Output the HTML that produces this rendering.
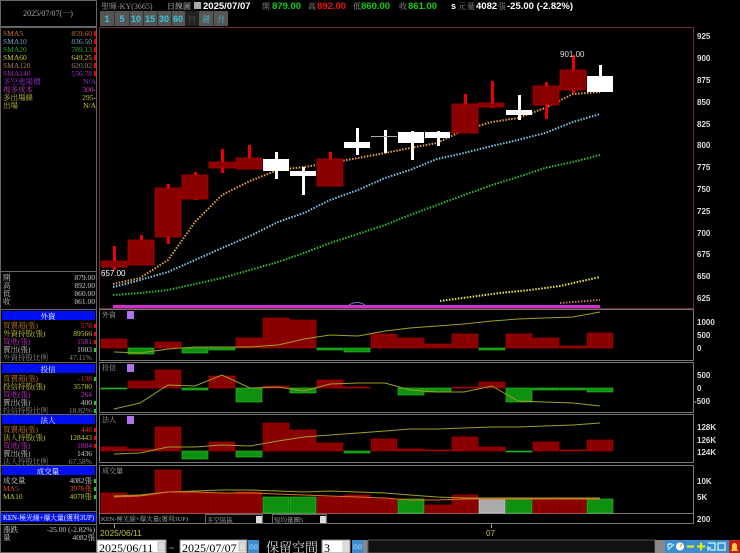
<!DOCTYPE html>
<html><head><meta charset="utf-8"><style>
body{margin:0;background:#000;width:740px;height:553px;overflow:hidden}
svg{display:block;font-size:8px}
text{font-family:"Liberation Sans","Noto Sans CJK TC",sans-serif}
.s{font-family:"Liberation Serif","Noto Serif CJK SC",serif}
</style></head><body>
<svg width="740" height="553" viewBox="0 0 740 553" xmlns="http://www.w3.org/2000/svg">
<rect width="740" height="553" fill="#000"/>
<rect x="0.5" y="0.5" width="96" height="26" fill="none" stroke="#666"/>
<text x="48" y="16" text-anchor="middle" class="s" fill="#aaa">2025/07/07(一)</text>
<rect x="0.5" y="27.5" width="96" height="525" fill="none" stroke="#666"/>
<g font-size="7.5">
<text x="3" y="36" class="s" fill="#c8782a">SMA5</text><text x="92" y="36" class="s" fill="#c8782a" text-anchor="end">859.60</text>
<text x="3" y="44" class="s" fill="#6fa6c8">SMA10</text><text x="92" y="44" class="s" fill="#6fa6c8" text-anchor="end">836.50</text>
<text x="3" y="52" class="s" fill="#2ea82e">SMA20</text><text x="92" y="52" class="s" fill="#2ea82e" text-anchor="end">789.13</text>
<text x="3" y="60" class="s" fill="#c8c83a">SMA60</text><text x="92" y="60" class="s" fill="#c8c83a" text-anchor="end">649.25</text>
<text x="3" y="68" class="s" fill="#a08060">SMA120</text><text x="92" y="68" class="s" fill="#a08060" text-anchor="end">620.02</text>
<text x="3" y="76" class="s" fill="#a030c0">SMA240</text><text x="92" y="76" class="s" fill="#a030c0" text-anchor="end">556.78</text>
<text x="3" y="84" class="s" fill="#9030d0">多空進場價</text><text x="96" y="84" class="s" fill="#9030d0" text-anchor="end">N/A</text>
<text x="3" y="92" class="s" fill="#c040c0">視多成本</text><text x="96" y="92" class="s" fill="#c040c0" text-anchor="end">300-</text>
<text x="3" y="100" class="s" fill="#c8c83a">多出場線</text><text x="96" y="100" class="s" fill="#c8c83a" text-anchor="end">295-</text>
<text x="3" y="108" class="s" fill="#c8c83a">出場</text><text x="96" y="108" class="s" fill="#c8c83a" text-anchor="end">N/A</text>
</g>
<g fill="#e00"><rect x="94" y="31" width="2" height="5"/><rect x="94" y="39" width="2" height="5"/><rect x="94" y="47" width="2" height="5"/><rect x="94" y="55" width="2" height="5"/><rect x="94" y="63" width="2" height="5"/><rect x="94" y="71" width="2" height="5"/></g>
<line x1="0" y1="271.5" x2="97" y2="271.5" stroke="#666"/>
<g font-size="7.5">
<text x="3" y="280" class="s" fill="#ccc">開</text><text x="95" y="280" class="s" fill="#ccc" text-anchor="end">879.00</text>
<text x="3" y="288" class="s" fill="#ccc">高</text><text x="95" y="288" class="s" fill="#ccc" text-anchor="end">892.00</text>
<text x="3" y="296" class="s" fill="#ccc">低</text><text x="95" y="296" class="s" fill="#ccc" text-anchor="end">860.00</text>
<text x="3" y="304" class="s" fill="#ccc">收</text><text x="95" y="304" class="s" fill="#ccc" text-anchor="end">861.00</text>
</g>
<line x1="0" y1="309.5" x2="97" y2="309.5" stroke="#666"/>
<g font-size="7.5">
<rect x="2" y="311" width="93" height="9" fill="#0010f0"/><text x="48" y="319" class="s" fill="#fff" text-anchor="middle">外資</text>
<text x="3" y="328" class="s" fill="#c8782a">買賣超(張)</text><text x="92" y="328" class="s" fill="#e03030" text-anchor="end">578</text>
<text x="3" y="336" class="s" fill="#c8c83a">外資持股(張)</text><text x="92" y="336" class="s" fill="#c8c83a" text-anchor="end">89566</text>
<text x="3" y="344" class="s" fill="#c030c0">買進(張)</text><text x="92" y="344" class="s" fill="#c030c0" text-anchor="end">1581</text>
<text x="3" y="352" class="s" fill="#ccc">賣出(張)</text><text x="92" y="352" class="s" fill="#ccc" text-anchor="end">1003</text>
<text x="3" y="360" class="s" fill="#888">外資持股比例</text><text x="92" y="360" class="s" fill="#888" text-anchor="end">47.11%</text>
<rect x="2" y="364" width="93" height="9" fill="#0010f0"/><text x="48" y="372" class="s" fill="#fff" text-anchor="middle">投信</text>
<text x="3" y="381" class="s" fill="#c8782a">買賣超(張)</text><text x="92" y="381" class="s" fill="#e03030" text-anchor="end">-138</text>
<text x="3" y="389" class="s" fill="#c8c83a">投信持股(張)</text><text x="92" y="389" class="s" fill="#c8c83a" text-anchor="end">35780</text>
<text x="3" y="397" class="s" fill="#c030c0">買進(張)</text><text x="92" y="397" class="s" fill="#c030c0" text-anchor="end">264</text>
<text x="3" y="405" class="s" fill="#ccc">賣出(張)</text><text x="92" y="405" class="s" fill="#ccc" text-anchor="end">400</text>
<text x="3" y="413" class="s" fill="#888">投信持股比例</text><text x="92" y="413" class="s" fill="#888" text-anchor="end">18.82%</text>
<rect x="2" y="415" width="93" height="9" fill="#0010f0"/><text x="48" y="423" class="s" fill="#fff" text-anchor="middle">法人</text>
<text x="3" y="432" class="s" fill="#c8782a">買賣超(張)</text><text x="92" y="432" class="s" fill="#e03030" text-anchor="end">448</text>
<text x="3" y="440" class="s" fill="#c8c83a">法人持股(張)</text><text x="92" y="440" class="s" fill="#c8c83a" text-anchor="end">128443</text>
<text x="3" y="448" class="s" fill="#c030c0">買進(張)</text><text x="92" y="448" class="s" fill="#c030c0" text-anchor="end">1884</text>
<text x="3" y="456" class="s" fill="#ccc">賣出(張)</text><text x="92" y="456" class="s" fill="#ccc" text-anchor="end">1436</text>
<text x="3" y="464" class="s" fill="#888">法人持股比例</text><text x="92" y="464" class="s" fill="#888" text-anchor="end">67.58%</text>
<rect x="2" y="466" width="93" height="9" fill="#0010f0"/><text x="48" y="474" class="s" fill="#fff" text-anchor="middle">成交量</text>
<text x="3" y="483" class="s" fill="#ccc">成交量</text><text x="92" y="483" class="s" fill="#ccc" text-anchor="end">4082張</text>
<text x="3" y="491" class="s" fill="#e05030">MA5</text><text x="92" y="491" class="s" fill="#e05030" text-anchor="end">3976張</text>
<text x="3" y="499" class="s" fill="#c8c83a">MA10</text><text x="92" y="499" class="s" fill="#c8c83a" text-anchor="end">4078張</text>
</g>
<line x1="0" y1="362.5" x2="97" y2="362.5" stroke="#666"/>
<line x1="0" y1="414.5" x2="97" y2="414.5" stroke="#666"/>
<line x1="0" y1="465.5" x2="97" y2="465.5" stroke="#666"/>
<line x1="0" y1="511.5" x2="97" y2="511.5" stroke="#666"/>
<rect x="1" y="513" width="95" height="9" fill="#0010f0"/><text x="3" y="520" class="s" fill="#fff" font-size="6.8">KEN-極光線+爆大量(獲利3UP)</text>
<line x1="0" y1="524.5" x2="97" y2="524.5" stroke="#666"/>
<text x="3" y="532" class="s" fill="#ccc" font-size="7.5">漲跌</text><text x="95" y="532" class="s" fill="#ccc" text-anchor="end" font-size="7.5">-25.00 (-2.82%)</text>
<text x="3" y="540" class="s" fill="#ccc" font-size="7.5">量</text><text x="95" y="540" class="s" fill="#ccc" text-anchor="end" font-size="7.5">4082張</text>
<g fill="#2c2"><rect x="94" y="348" width="2" height="4"/><rect x="94" y="377" width="2" height="4"/><rect x="94" y="401" width="2" height="4"/><rect x="94" y="409" width="2" height="4"/><rect x="94" y="479" width="2" height="4"/><rect x="94" y="487" width="2" height="4"/><rect x="94" y="495" width="2" height="4"/></g>
<g fill="#e00"><rect x="94" y="324" width="2" height="4"/><rect x="94" y="332" width="2" height="4"/><rect x="94" y="340" width="2" height="4"/><rect x="94" y="428" width="2" height="4"/><rect x="94" y="436" width="2" height="4"/><rect x="94" y="444" width="2" height="4"/></g>

<text x="101" y="9" class="s" fill="#999">聖暉-KY(3665)</text>
<text x="167" y="9" class="s" fill="#ccc">日線圖</text>
<rect x="194" y="2" width="7" height="7" fill="#aaa"/>
<text x="203" y="9" fill="#fff" font-weight="bold" font-size="9.5">2025/07/07</text>
<text x="262" y="9" class="s" fill="#999">開</text><text x="272" y="9" fill="#1c1" font-weight="bold" font-size="9.5">879.00</text>
<text x="308" y="9" class="s" fill="#999">高</text><text x="317" y="9" fill="#e11" font-weight="bold" font-size="9.5">892.00</text>
<text x="353" y="9" class="s" fill="#999">低</text><text x="361" y="9" fill="#1c1" font-weight="bold" font-size="9.5">860.00</text>
<text x="399" y="9" class="s" fill="#999">收</text><text x="408" y="9" fill="#1c1" font-weight="bold" font-size="9.5">861.00</text>
<text x="451" y="9" fill="#fff" font-weight="bold" font-size="9">s</text>
<text x="458" y="9" class="s" fill="#999">元</text><text x="467" y="9" class="s" fill="#999">量</text>
<text x="476" y="9" fill="#fff" font-weight="bold" font-size="9.5">4082</text>
<text x="498" y="9" class="s" fill="#999">張</text>
<text x="507" y="9" fill="#fff" font-weight="bold" font-size="9.5">-25.00 (-2.82%)</text>
<rect x="100" y="11" width="128" height="15" fill="#555"/>
<rect x="185" y="11" width="14" height="15" fill="#222"/>
<g fill="#3cc8d8" font-weight="bold" font-size="9">
<text x="107" y="22" text-anchor="middle">1</text><text x="122" y="22" text-anchor="middle">5</text><text x="136" y="22" text-anchor="middle">10</text><text x="150" y="22" text-anchor="middle">15</text><text x="164" y="22" text-anchor="middle">30</text><text x="178" y="22" text-anchor="middle">60</text></g>
<text x="192" y="22" class="s" fill="#555" text-anchor="middle">日</text>
<text x="206" y="22" class="s" fill="#3cc8d8" text-anchor="middle">週</text>
<text x="221" y="22" class="s" fill="#3cc8d8" text-anchor="middle">月</text>
<g stroke="#333"><line x1="114.5" y1="11" x2="114.5" y2="26"/><line x1="129.5" y1="11" x2="129.5" y2="26"/><line x1="143.5" y1="11" x2="143.5" y2="26"/><line x1="157.5" y1="11" x2="157.5" y2="26"/><line x1="171.5" y1="11" x2="171.5" y2="26"/><line x1="213.5" y1="11" x2="213.5" y2="26"/></g>

<rect x="99.5" y="27.5" width="594" height="281" fill="none" stroke="#6a2a3a"/>
<g fill="#ddd" font-size="8" font-weight="bold">
<text x="697" y="39">925</text><text x="697" y="61">900</text><text x="697" y="83">875</text><text x="697" y="105">850</text><text x="697" y="127">825</text><text x="697" y="148">800</text><text x="697" y="170">775</text><text x="697" y="192">750</text><text x="697" y="214">725</text><text x="697" y="236">700</text><text x="697" y="257">675</text><text x="697" y="279">650</text><text x="697" y="301">625</text>
</g>
<g fill="none" stroke-width="2" stroke-dasharray="1.5,1.5">
<polyline stroke="#e8a040" points="113,284 140,278 168,260 195,222 222,195 250,181 278,170 304,167 330,163 358,158 385,153 410,148 437,143 464,130 492,122 518,118 545,108 573,94 600,92"/>
<polyline stroke="#80c8e8" points="113,287 140,280 168,272 195,260 222,248 250,236 278,222 304,213 330,200 358,190 385,178 410,170 437,159 464,153 492,146 518,140 545,133 573,122 600,114"/>
<polyline stroke="#30c030" points="113,295 140,293 168,290 195,284 222,278 250,270 278,262 304,253 330,243 358,234 385,225 410,215 437,205 464,195 492,185 518,177 545,168 573,162 600,155"/>
<polyline stroke="#e8e840" points="440,301 470,297 500,293 530,290 560,286 600,277"/>
<polyline stroke="#c08060" points="560,303 600,300"/>
</g>
<rect x="113" y="305" width="487" height="3" fill="#d030d0"/>
<path d="M349 305 Q357 300 365 305" stroke="#6080c0" fill="none"/>
<g fill="#e00">
<rect x="113" y="246" width="3" height="24"/><rect x="140" y="235" width="3" height="5"/><rect x="167" y="184" width="3" height="60"/><rect x="194" y="172" width="3" height="28"/><rect x="221" y="149" width="3" height="24"/><rect x="248" y="145" width="3" height="14"/><rect x="329" y="152" width="3" height="8"/><rect x="464" y="94" width="3" height="10"/><rect x="491" y="81" width="3" height="27"/><rect x="545" y="82" width="3" height="37"/><rect x="572" y="55" width="3" height="38"/>
</g>
<g fill="#8a0000" stroke="#b00000" stroke-width="0.8">
<rect x="101" y="261" width="26" height="6"/><rect x="128" y="240" width="26" height="25"/><rect x="155" y="188" width="26" height="49"/><rect x="182" y="175" width="26" height="24"/><rect x="209" y="162" width="26" height="6"/><rect x="236" y="158" width="26" height="11"/><rect x="317" y="159" width="26" height="27"/><rect x="452" y="104" width="26" height="29"/><rect x="478" y="103" width="26" height="4"/><rect x="533" y="86" width="26" height="19"/><rect x="560" y="70" width="26" height="20"/>
</g>
<g fill="#fff">
<rect x="275" y="152" width="3" height="27"/><rect x="263" y="159" width="26" height="12"/>
<rect x="302" y="167" width="3" height="28"/><rect x="290" y="171" width="26" height="5"/>
<rect x="356" y="128" width="3" height="27"/><rect x="344" y="142" width="26" height="6"/>
<rect x="384" y="130" width="3" height="23"/><rect x="371" y="136" width="26" height="1" fill="#aaa"/>
<rect x="411" y="131" width="3" height="29"/><rect x="398" y="132" width="26" height="11"/>
<rect x="437" y="131" width="3" height="15"/><rect x="425" y="132" width="25" height="6"/>
<rect x="518" y="95" width="3" height="25"/><rect x="506" y="110" width="26" height="5"/>
<rect x="599" y="65" width="3" height="12"/><rect x="587" y="76" width="26" height="16"/>
</g>
<text x="101" y="276" fill="#fff" font-size="8">657.00</text>
<text x="560" y="57" fill="#ddd" font-size="8">901.00</text>

<g fill="none" stroke="#777"><rect x="99.5" y="309.5" width="594" height="51"/><rect x="99.5" y="362.5" width="594" height="50"/><rect x="99.5" y="414.5" width="594" height="48"/><rect x="99.5" y="465.5" width="594" height="48"/><rect x="99.5" y="513.5" width="594" height="10"/></g>
<text x="102" y="317" class="s" fill="#aaa" font-size="7">外資</text><rect x="127" y="311" width="7" height="8" fill="#b070f0"/>
<text x="102" y="370" class="s" fill="#aaa" font-size="7">投信</text><rect x="127" y="364" width="7" height="8" fill="#b070f0"/>
<text x="102" y="422" class="s" fill="#aaa" font-size="7">法人</text><rect x="127" y="416" width="7" height="8" fill="#b070f0"/>
<text x="102" y="473" class="s" fill="#aaa" font-size="7">成交量</text>
<g fill="#ddd" font-size="8" font-weight="bold">
<text x="697" y="325">1000</text><text x="697" y="338">500</text><text x="697" y="351">0</text>
<text x="697" y="378">500</text><text x="697" y="391">0</text><text x="694" y="404">-500</text>
<text x="697" y="430">128K</text><text x="697" y="443">126K</text><text x="697" y="455">124K</text>
<text x="697" y="484">10K</text><text x="697" y="500">5K</text><text x="697" y="522">200</text>
</g>
<g stroke="#b00" stroke-width="0.6">
<rect fill="#8a0000" x="101" y="339" width="26" height="9"/><rect fill="#8a0000" x="155" y="342" width="26" height="6"/><rect fill="#8a0000" x="236" y="338" width="26" height="10"/><rect fill="#8a0000" x="263" y="318" width="26" height="30"/><rect fill="#8a0000" x="290" y="320" width="26" height="28"/><rect fill="#8a0000" x="371" y="334" width="26" height="14"/><rect fill="#8a0000" x="398" y="338" width="26" height="10"/><rect fill="#8a0000" x="425" y="344" width="26" height="4"/><rect fill="#8a0000" x="452" y="334" width="26" height="14"/><rect fill="#8a0000" x="506" y="334" width="26" height="14"/><rect fill="#8a0000" x="533" y="338" width="26" height="10"/><rect fill="#8a0000" x="560" y="346" width="26" height="2"/><rect fill="#8a0000" x="587" y="333" width="26" height="15"/>
</g>
<g fill="#109010" stroke="#2c2" stroke-width="0.6">
<rect x="128" y="348" width="26" height="6"/><rect x="182" y="348" width="26" height="5"/><rect x="209" y="348" width="26" height="2"/><rect x="317" y="348" width="26" height="2"/><rect x="344" y="348" width="26" height="4"/><rect x="479" y="348" width="26" height="2"/>
</g>
<polyline fill="none" stroke="#a0a020" points="114,352 140,353 168,349 195,347 222,347 250,347 278,345 304,339 330,335 358,336 385,331 410,328 437,326 464,324 492,321 518,319 545,318 573,317 600,312"/>
<g stroke="#b00" stroke-width="0.6" fill="#8a0000">
<rect x="128" y="381" width="26" height="7"/><rect x="155" y="370" width="26" height="18"/><rect x="209" y="376" width="26" height="12"/><rect x="263" y="386" width="26" height="2"/><rect x="317" y="380" width="26" height="8"/><rect x="344" y="387" width="26" height="1"/><rect x="452" y="387" width="26" height="1"/><rect x="479" y="382" width="26" height="6"/>
</g>
<g fill="#109010" stroke="#2c2" stroke-width="0.6">
<rect x="101" y="388" width="26" height="1"/><rect x="182" y="388" width="26" height="2"/><rect x="236" y="388" width="26" height="14"/><rect x="290" y="388" width="26" height="5"/><rect x="398" y="388" width="26" height="7"/><rect x="425" y="388" width="26" height="4"/><rect x="506" y="388" width="26" height="14"/><rect x="533" y="388" width="26" height="2"/><rect x="560" y="388" width="26" height="2"/><rect x="587" y="388" width="26" height="4"/>
</g>
<polyline fill="none" stroke="#a0a020" points="114,409 140,403 168,385 195,386 222,375 250,388 278,387 304,391 330,384 358,383 385,383 410,390 437,392 464,392 492,386 518,401 545,402 573,403 600,406"/>
<g stroke="#b00" stroke-width="0.6" fill="#8a0000">
<rect x="101" y="447" width="26" height="4"/><rect x="128" y="449" width="26" height="2"/><rect x="155" y="427" width="26" height="24"/><rect x="209" y="442" width="26" height="9"/><rect x="263" y="423" width="26" height="28"/><rect x="290" y="430" width="26" height="21"/><rect x="317" y="443" width="26" height="8"/><rect x="371" y="439" width="26" height="12"/><rect x="398" y="449" width="26" height="2"/><rect x="425" y="450" width="26" height="1"/><rect x="452" y="437" width="26" height="14"/><rect x="479" y="447" width="26" height="4"/><rect x="533" y="442" width="26" height="9"/><rect x="560" y="450" width="26" height="1"/><rect x="587" y="440" width="26" height="11"/>
</g>
<g fill="#109010" stroke="#2c2" stroke-width="0.6">
<rect x="182" y="451" width="26" height="8"/><rect x="236" y="451" width="26" height="6"/><rect x="344" y="451" width="26" height="2"/><rect x="506" y="451" width="26" height="1"/>
</g>
<polyline fill="none" stroke="#a0a020" points="114,454 140,453 168,447 195,447 222,445 250,446 278,441 304,437 330,435 358,433 385,431 410,429 437,429 464,428 492,427 518,427 545,426 573,425 600,423"/>
<g stroke="#b00" stroke-width="0.6" fill="#8a0000">
<rect x="101" y="493" width="26" height="20"/><rect x="128" y="495" width="26" height="18"/><rect x="155" y="470" width="26" height="43"/><rect x="182" y="493" width="26" height="20"/><rect x="209" y="493" width="26" height="20"/><rect x="236" y="492" width="26" height="21"/><rect x="317" y="497" width="26" height="16"/><rect x="344" y="495" width="26" height="18"/><rect x="371" y="499" width="26" height="14"/><rect x="425" y="505" width="26" height="8"/><rect x="452" y="495" width="26" height="18"/><rect x="533" y="500" width="26" height="13"/><rect x="560" y="498" width="26" height="15"/>
</g>
<g fill="#109010" stroke="#2c2" stroke-width="0.6">
<rect x="263" y="497" width="26" height="16"/><rect x="290" y="497" width="26" height="16"/><rect x="398" y="499" width="26" height="14"/><rect x="506" y="499" width="26" height="14"/><rect x="587" y="499" width="26" height="14"/>
</g>
<rect x="479" y="498" width="26" height="15" fill="#aaa" stroke="#ddd" stroke-width="0.6"/>
<polyline fill="none" stroke="#a0a020" points="114,496 140,495 168,492 195,491 222,490 250,490 278,491 304,492 330,491 358,492 385,493 410,495 437,497 464,498 492,498 518,498 545,498 573,498 600,498"/>
<polyline fill="none" stroke="#e07020" points="114,497 140,496 168,492 195,492 222,493 250,493 278,494 304,495 330,496 358,497 385,498 410,500 437,500 464,499 492,499 518,499 545,499 573,499 600,499"/>
<text x="101" y="521" class="s" fill="#aaa" font-size="6.5">KEN-極光線+爆大量(獲利3UP)</text>
<rect x="205.5" y="514.5" width="57" height="9" fill="#000" stroke="#666"/><text x="207" y="522" class="s" fill="#aaa" font-size="6.5">多空區區</text><rect x="256" y="516" width="6" height="7" fill="#ddd"/>
<rect x="272.5" y="514.5" width="54" height="9" fill="#000" stroke="#666"/><text x="274" y="522" class="s" fill="#aaa" font-size="6.5">短均量圖5</text><rect x="320" y="516" width="6" height="7" fill="#ddd"/>
<line x1="114.5" y1="524" x2="114.5" y2="528" stroke="#aa3"/>
<text x="100" y="536" fill="#c0c040" font-size="8.5">2025/06/11</text>
<line x1="491.5" y1="524" x2="491.5" y2="528" stroke="#aa3"/>
<text x="486" y="536" fill="#c0c040" font-size="8">07</text>
<rect x="97" y="540" width="69" height="13" fill="#fff" stroke="#888"/>
<text x="99" y="552" class="s" font-size="12" fill="#000">2025/06/11</text><rect x="158" y="542" width="7" height="9" fill="#ddd" stroke="#888" stroke-width="0.5"/>
<text x="169" y="551" fill="#ccc" font-size="9">~</text>
<rect x="180" y="540" width="67" height="13" fill="#fff" stroke="#888"/>
<text x="182" y="552" class="s" font-size="12" fill="#000">2025/07/07</text><rect x="239" y="542" width="7" height="9" fill="#ddd" stroke="#888" stroke-width="0.5"/>
<rect x="248" y="540" width="11" height="13" fill="#3a8ed0"/><text x="249" y="549" fill="#bdf" font-size="6">GO</text>
<text x="266" y="552" fill="#ddd" font-size="13" class="s">保留空間</text>
<rect x="322" y="540" width="28" height="13" fill="#fff" stroke="#888"/><text x="324" y="552" class="s" font-size="12" fill="#000">3</text>
<rect x="342" y="541" width="7" height="11" fill="#ddd"/>
<rect x="352" y="540" width="11" height="13" fill="#3a8ed0"/><text x="353" y="549" fill="#bdf" font-size="6">GO</text>
<rect x="363" y="540" width="5" height="13" fill="#888"/>
<rect x="368" y="540" width="287" height="13" fill="#111" stroke="#555"/>
<rect x="655" y="540" width="10" height="13" fill="#888"/>
<rect x="665" y="540" width="64" height="13" fill="#3a8ed0"/>
<g fill="none" stroke="#cfe" stroke-width="1.2">
<path d="M668 550 L674 544 M668 544 H672 M668 544 V548"/>
<circle cx="680" cy="546.5" r="4" fill="#fff" stroke="none"/><path d="M680 546.5 L682 544" stroke="#e80"/>
<path d="M687 546.5 H694" stroke="#ee0" stroke-width="2"/>
<path d="M697 546.5 H705 M701 542.5 V550.5" stroke="#ee0" stroke-width="2"/>
<path d="M708 543 H715 V550 H710 M708 546 V550 L711 547"/>
<rect x="718" y="543" width="7" height="7"/>
</g>
<rect x="729" y="540" width="11" height="13" fill="#c02010"/>
<path d="M731 551 H738 L737 549 V545 Q734.5 541 732 545 V549 Z" fill="#fc4"/>
</svg>
</body></html>
